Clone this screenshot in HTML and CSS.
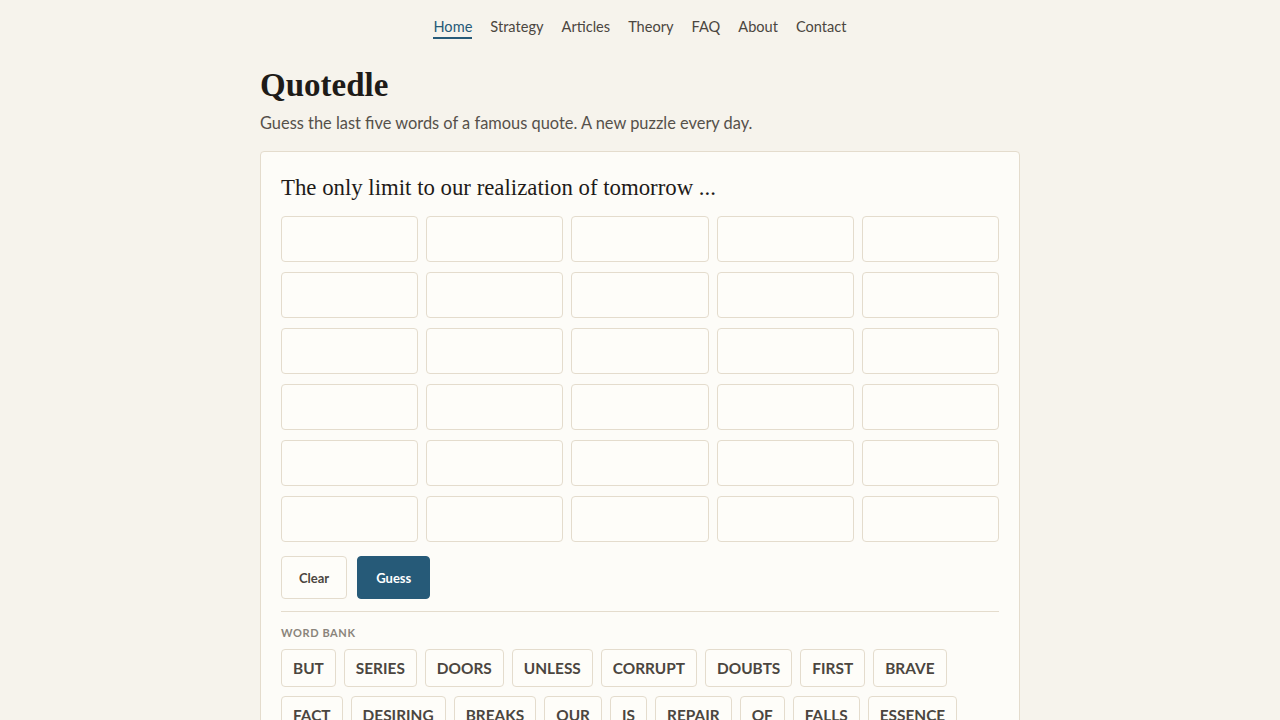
FILE: index.html
```html
<!DOCTYPE html>
<html lang="en">
<head>
  <meta charset="UTF-8">
  <meta name="viewport" content="width=device-width, initial-scale=1.0">
  <title>Quotedle</title>
  <link rel="stylesheet" href="styles.css">
</head>
<body>
  <nav class="topnav">
    <a href="#" class="active">Home</a>
    <a href="#">Strategy</a>
    <a href="#">Articles</a>
    <a href="#">Theory</a>
    <a href="#">FAQ</a>
    <a href="#">About</a>
    <a href="#">Contact</a>
  </nav>

  <main class="page">
    <h1 class="title">Quotedle</h1>
    <p class="intro">Guess the last five words of a famous quote. A new puzzle every day.</p>

    <section class="card">
      <h2 class="quote">The only limit to our realization of tomorrow ...</h2>

      <div class="board" id="board"></div>

      <div class="actions">
        <button class="btn">Clear</button>
        <button class="btn primary">Guess</button>
      </div>

      <hr class="divider">

      <div class="bank-label">Word bank</div>
      <div class="bank" id="bank"></div>
    </section>
  </main>

  <script>
    // six guesses, five words each
    var board = document.getElementById("board");
    for (var i = 0; i < 30; i++) {
      var cell = document.createElement("div");
      cell.className = "cell";
      board.appendChild(cell);
    }

    var words = ["but", "series", "doors", "unless", "corrupt", "doubts", "first", "brave",
                 "fact", "desiring", "breaks", "our", "is", "repair", "of", "falls", "essence",
                 "will", "doubts", "today", "be", "the"];
    var bank = document.getElementById("bank");
    words.forEach(function (w) {
      var chip = document.createElement("button");
      chip.className = "chip";
      chip.textContent = w.toUpperCase();
      bank.appendChild(chip);
    });
  </script>
</body>
</html>
```

FILE: styles.css
```css
body {
  margin: 0;
  font-family: Lato, "Open Sans", sans-serif;
  background-color: #f6f3ec;
  color: #3f3b36;
}

/* top navigation */
.topnav {
  display: flex;
  justify-content: center;
  gap: 18px;
  padding-top: 18px;
}

.topnav a {
  font-size: 14.6px;
  color: #4b4640;
  text-decoration: none;
  padding-bottom: 2px;
  border-bottom: 2px solid transparent;
}

.topnav a.active {
  color: #265a78;
  border-bottom-color: #265a78;
}

.page {
  width: 760px;
  margin: 0 auto;
  padding-top: 26px;
}

.title {
  font-family: "Liberation Serif", serif;
  font-weight: bold;
  font-size: 33px;
  color: #1e1b18;
  margin: 0;
  line-height: 40px;
}

.intro {
  font-size: 16.4px;
  color: #55504a;
  margin: 8px 0 19px;
}

/* the puzzle card */
.card {
  background-color: #fdfcf8;
  border: 1px solid #e4dccd;
  border-radius: 4px;
  padding: 20px 20px 0;
}

.quote {
  font-family: "Liberation Serif", serif;
  font-weight: normal;
  font-size: 22.8px;
  color: #1e1b18;
  margin: 2px 0 14px;
  line-height: 28px;
}

.board {
  display: grid;
  grid-template-columns: repeat(5, 1fr);
  column-gap: 8px;
  row-gap: 10px;
}

.cell {
  height: 44px;
  border: 1px solid #e4dccd;
  border-radius: 4px;
  background-color: #fefdf9;
}

.actions {
  display: flex;
  gap: 10px;
  margin-top: 14px;
}

.btn {
  height: 43px;
  padding: 0 17px;
  font-family: inherit;
  font-size: 13px;
  font-weight: bold;
  color: #4b4640;
  background-color: #fefdf9;
  border: 1px solid #e4dccd;
  border-radius: 4px;
  cursor: pointer;
}

.btn.primary {
  background-color: #265a78;
  border-color: #265a78;
  color: #fff;
  padding: 0 18px;
}

.divider {
  border: none;
  border-top: 1px solid #e4dccd;
  margin: 12px 0 14px;
}

.bank-label {
  font-size: 11px;
  font-weight: bold;
  letter-spacing: 0.6px;
  text-transform: uppercase;
  color: #8a847b;
  margin-bottom: 10px;
}

.bank {
  display: flex;
  flex-wrap: wrap;
  gap: 9px 8px;
  padding-bottom: 20px;
}

.chip {
  height: 38px;
  padding: 0 11px;
  font-family: inherit;
  font-size: 15.4px;
  font-weight: bold;
  color: #4b4640;
  background-color: #fefdf9;
  border: 1px solid #e4dccd;
  border-radius: 4px;
  cursor: pointer;
}
```
